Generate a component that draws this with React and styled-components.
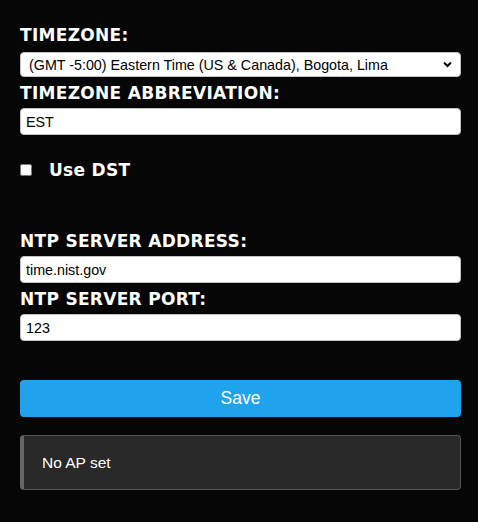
import styled, { createGlobalStyle } from 'styled-components'

const GlobalStyle = createGlobalStyle`
  html, body {
    margin: 0;
    background: #060606;
  }
`

const Page = styled.div`
  width: 441px;
  padding: 25px 20px 30px;
  color: #fff;
  font-family: "DejaVu Sans", Verdana, sans-serif;
`

const Label = styled.div`
  font-size: 17px;
  font-weight: bold;
  line-height: 20px;
  letter-spacing: 0.3px;
  margin-top: ${(p) => p.$top || 0}px;
`

const fieldBase = `
  display: block;
  box-sizing: border-box;
  width: 100%;
  background: #fff;
  color: #000;
  border: 1px solid #c4c4c4;
  border-radius: 4px;
  font-family: "Liberation Sans", Arial, sans-serif;
  font-size: 14.3px;
  margin: 0;
  outline: none;
`

const SelectWrap = styled.div`
  position: relative;
  margin-top: 7px;
`

const Select = styled.select`
  ${fieldBase}
  appearance: none;
  height: 25px;
  padding: 0 24px 0 8px;
`

const Chevron = styled.svg`
  position: absolute;
  right: 9px;
  top: 9px;
  width: 9px;
  height: 7px;
  pointer-events: none;
`

const Input = styled.input`
  ${fieldBase}
  height: 27px;
  margin-top: ${(p) => p.$top || 5}px;
  padding: 0 5px;
`

const CheckRow = styled.label`
  display: flex;
  align-items: center;
  gap: 17px;
  margin-top: 25px;
  font-size: 17px;
  font-weight: bold;
  line-height: 20px;
  letter-spacing: 0.3px;
`

const Check = styled.input`
  width: 12px;
  height: 12px;
  margin: 0;
`

const SaveButton = styled.button`
  display: block;
  width: 100%;
  height: 37px;
  margin-top: 39px;
  border: 0;
  border-radius: 4px;
  background: #1fa3ec;
  color: #fff;
  font-family: "Liberation Sans", Arial, sans-serif;
  font-size: 17.5px;
  cursor: pointer;
`

const Message = styled.div`
  box-sizing: border-box;
  height: 55px;
  margin-top: 18px;
  padding: 0 18px;
  display: flex;
  align-items: center;
  background: #292929;
  border: 1px solid #555;
  border-left: 4px solid #666;
  border-radius: 4px;
  font-family: "Liberation Sans", Arial, sans-serif;
  font-size: 15.5px;
`

export default function App() {
  return (
    <>
      <GlobalStyle />
      <Page>
        <Label>TIMEZONE:</Label>
        <SelectWrap>
          <Select defaultValue="est">
            <option value="est">(GMT -5:00) Eastern Time (US &amp; Canada), Bogota, Lima</option>
          </Select>
          <Chevron viewBox="0 0 9 7">
            <path d="M1 1.5 L4.5 5 L8 1.5" fill="none" stroke="#000" strokeWidth="2" />
          </Chevron>
        </SelectWrap>
        <Label $top={6}>TIMEZONE ABBREVIATION:</Label>
        <Input defaultValue="EST" />
        <CheckRow>
          <Check type="checkbox" />
          Use DST
        </CheckRow>
        <Label $top={51}>NTP SERVER ADDRESS:</Label>
        <Input defaultValue="time.nist.gov" />
        <Label $top={6}>NTP SERVER PORT:</Label>
        <Input defaultValue="123" />
        <SaveButton>Save</SaveButton>
        <Message>No AP set</Message>
      </Page>
    </>
  )
}
